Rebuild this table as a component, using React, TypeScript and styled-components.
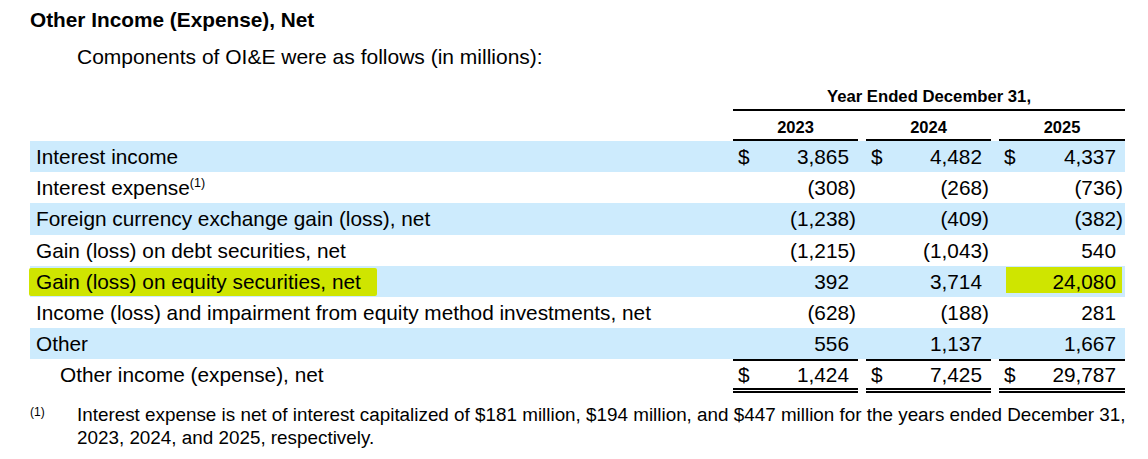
import styled, { createGlobalStyle } from "styled-components";

const GlobalStyle = createGlobalStyle`
  body {
    margin: 0;
    background: #fff;
    color: #000;
    font-family: "Liberation Sans", Arial, sans-serif;
  }
`;

const Page = styled.div`
  width: 1148px;
  height: 459px;
  box-sizing: border-box;
  padding: 8px 0 0 30px;
  overflow: hidden;
`;

const Title = styled.h2`
  margin: 0;
  font-size: 20.8px;
  line-height: 24px;
  font-weight: 700;
`;

const Intro = styled.p`
  margin: 13px 0 0 47px;
  font-size: 21px;
  line-height: 24px;
`;

const Table = styled.div`
  margin-top: 16px;
  width: 1095px;
`;

const Grid = styled.div`
  display: grid;
  grid-template-columns: 695px 125px 125px 126px;
  column-gap: 8px;
`;

const HeadRow = styled(Grid)`
  font-weight: 700;
  text-align: center;
`;

const PeriodHead = styled.div`
  grid-column: 2 / 5;
  font-size: 16.7px;
  line-height: 24px;
  border-bottom: 2px solid #000;
`;

const YearHead = styled.div`
  padding-top: 4px;
  font-size: 16.5px;
  line-height: 24px;
  border-bottom: 2px solid #000;
`;

const Row = styled(Grid)<{ $band?: boolean }>`
  background: ${(p) => (p.$band ? "#cdebfd" : "transparent")};
  font-size: 20.8px;
  line-height: 31.2px;
`;

const Label = styled.div`
  padding-left: 6px;
  white-space: nowrap;
`;

const Marked = styled.span`
  display: inline-block;
  line-height: 28px;
  margin-left: -7px;
  padding: 0 16px 0 7px;
  background: #cfe500;
  border-radius: 2px;
`;

const Sup = styled.sup`
  font-size: 12.5px;
  line-height: 0;
  vertical-align: 8px;
`;

const Cell = styled.div<{ $mark?: boolean }>`
  display: flex;
  justify-content: space-between;
  padding: 0 9px 0 5px;
  white-space: nowrap;
  background: ${(p) =>
    p.$mark
      ? "linear-gradient(#cfe500, #cfe500) 7px 1px / calc(100% - 10px) calc(100% - 5px) no-repeat"
      : "none"};
`;

const Amount = styled.span`
  flex: 1;
  text-align: right;
`;

const Close = styled.span`
  margin-right: -7px;
`;

const TotalRow = styled(Grid)`
  font-size: 20.8px;
  line-height: 26px;
`;

const TotalLabel = styled.div`
  padding: 3px 0 0 30px;
`;

const TotalCell = styled(Cell)`
  padding-top: 1px;
  border-top: 2px solid #000;
  border-bottom: 5px double #000;
`;

const Footnote = styled.div`
  display: flex;
  margin-top: 10px;
`;

const NoteMark = styled.div`
  width: 47px;
  flex: none;
  padding-top: 2px;
  font-size: 12px;
  line-height: 14px;
`;

const NoteText = styled.div`
  font-size: 18.85px;
  line-height: 23px;
  white-space: nowrap;
`;

type Line = {
  label: string;
  note?: boolean;
  values: number[];
  dollar?: boolean;
  mark?: boolean;
};

const lines: Line[] = [
  { label: "Interest income", values: [3865, 4482, 4337], dollar: true },
  { label: "Interest expense", note: true, values: [-308, -268, -736] },
  { label: "Foreign currency exchange gain (loss), net", values: [-1238, -409, -382] },
  { label: "Gain (loss) on debt securities, net", values: [-1215, -1043, 540] },
  { label: "Gain (loss) on equity securities, net", values: [392, 3714, 24080], mark: true },
  { label: "Income (loss) and impairment from equity method investments, net", values: [-628, -188, 281] },
  { label: "Other", values: [556, 1137, 1667] },
];

const totals = [1424, 7425, 29787];

function Value({ n }: { n: number }) {
  const text = Math.abs(n).toLocaleString("en-US");
  if (n < 0) {
    return (
      <Amount>
        ({text}
        <Close>)</Close>
      </Amount>
    );
  }
  return <Amount>{text}</Amount>;
}

export default function App() {
  return (
    <Page>
      <GlobalStyle />
      <Title>Other Income (Expense), Net</Title>
      <Intro>Components of OI&amp;E were as follows (in millions):</Intro>
      <Table>
        <HeadRow>
          <div />
          <PeriodHead>Year Ended December 31,</PeriodHead>
        </HeadRow>
        <HeadRow>
          <div />
          <YearHead>2023</YearHead>
          <YearHead>2024</YearHead>
          <YearHead>2025</YearHead>
        </HeadRow>
        {lines.map((line, i) => (
          <Row key={line.label} $band={i % 2 === 0}>
            <Label>
              {line.mark ? <Marked>{line.label}</Marked> : line.label}
              {line.note && <Sup>(1)</Sup>}
            </Label>
            {line.values.map((v, j) => (
              <Cell key={j} $mark={line.mark && j === 2}>
                <span>{line.dollar ? "$" : ""}</span>
                <Value n={v} />
              </Cell>
            ))}
          </Row>
        ))}
        <TotalRow>
          <TotalLabel>Other income (expense), net</TotalLabel>
          {totals.map((v, j) => (
            <TotalCell key={j}>
              <span>$</span>
              <Value n={v} />
            </TotalCell>
          ))}
        </TotalRow>
      </Table>
      <Footnote>
        <NoteMark>(1)</NoteMark>
        <NoteText>
          Interest expense is net of interest capitalized of $181 million, $194 million, and $447 million for the years ended December 31,
          <br />
          2023, 2024, and 2025, respectively.
        </NoteText>
      </Footnote>
    </Page>
  );
}
